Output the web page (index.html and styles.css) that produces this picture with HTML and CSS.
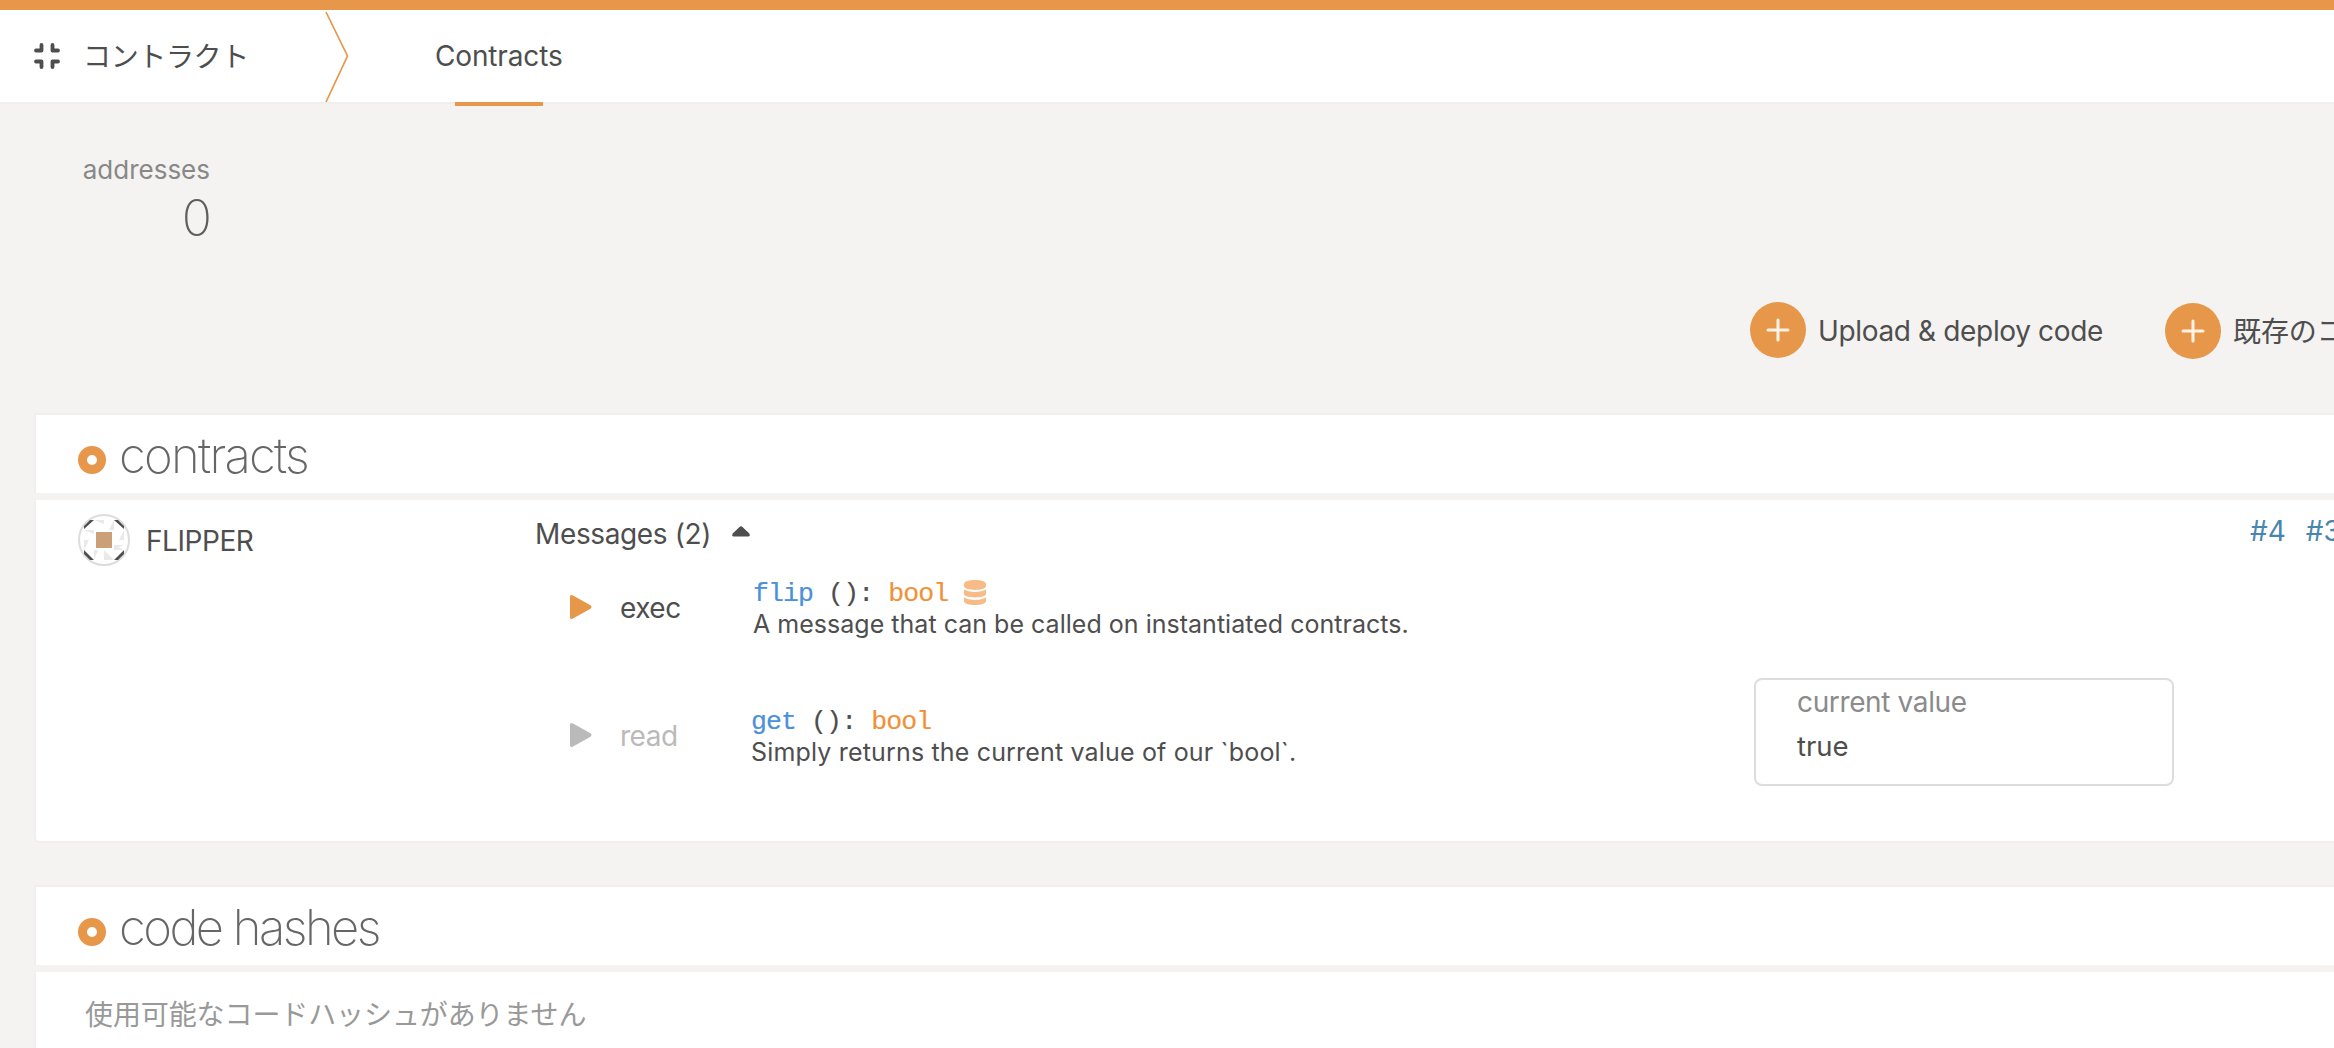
FILE: index.html
```html
<!DOCTYPE html>
<html lang="ja">
<head>
<meta charset="utf-8">
<title>Contracts</title>
<link rel="stylesheet" href="styles.css">
</head>
<body>
<header class="tabs">
  <div class="section-name">
    <svg class="compress" viewBox="0 0 26 26"><path d="M7.500 2V7.500H2M18.500 2V7.500H24M7.500 24V18.500H2M18.500 24V18.500H24"/></svg>
    <span class="jp">コントラクト</span>
  </div>
  <svg class="arrow" viewBox="0 0 24 92"><path d="M1 2L22.500 46L1 92"/></svg>
  <a class="tab"><span>Contracts</span></a>
</header>
<main>
  <section class="summary">
    <div class="summary-label">addresses</div>
    <div class="summary-value">0</div>
  </section>
  <div class="buttons">
    <button class="button"><svg viewBox="0 0 56 56"><circle cx="28" cy="28" r="28"/><path d="M28 18V38M18 28H38"/></svg><span class="upload">Upload &amp; deploy code</span></button>
    <button class="button second"><svg viewBox="0 0 56 56"><circle cx="28" cy="28" r="28"/><path d="M28 18V38M18 28H38"/></svg><span class="jp">既存のコ</span></button>
  </div>

  <section class="table">
    <h1 class="table-head"><i class="ring"></i><span class="title-contracts">contracts</span></h1>
    <div class="table-body contract">
      <div class="account">
        <svg class="identicon" viewBox="0 0 52 52">
          <circle class="edge" cx="26" cy="26" r="25"/>
          <path class="pale" d="M16 6H26V10ZM36 6V16H31ZM6 16H16V20ZM46 16V26H41ZM36 31H46L36 35ZM26 36L36 46H26ZM16 36H20L16 46ZM6 26H11L6 36ZM26 41L35 46H26ZM36 31L46 36H36Z"/>
          <path class="dark" d="M6 12L12 6H16L6 15ZM36 6H40L46 12V15ZM6 36L16 46H12L6 40ZM36 46L46 36V40L40 46Z"/>
          <path class="core" d="M18 18H34V34H18Z"/>
        </svg>
        <span class="name">FLIPPER</span>
      </div>
      <div class="messages">
        <div class="summary-row"><span class="msg-title">Messages (2)</span><svg class="caret" viewBox="0 0 18 11"><path d="M7.500 0.900Q9 -0.500 10.500 0.900L17.300 7.500Q18.500 10.500 16 10.500H2Q-0.500 10.500 0.700 7.500Z"/></svg></div>
        <div class="message">
          <div class="action"><svg class="play" viewBox="0 0 22 24"><path d="M0 2Q0-1 3 .5L20.500 10.300Q22.500 12 20.500 13.700L3 23.500Q0 25 0 22Z"/></svg><span>exec</span></div>
          <div class="details"><div class="signature"><b>flip</b> (): <em>bool</em><svg class="database" viewBox="0 0 22 25"><path d="M0 4C0-1.200 22-1.200 22 4V6C22 11.200 0 11.200 0 6ZM0 9.300Q4 12 11 12T22 9.300V14C22 18.500 0 18.500 0 14ZM0 17.300Q4 20 11 20T22 17.300V21C22 26.300 0 26.300 0 21Z"/></svg></div><p>A message that can be called on instantiated contracts.</p></div>
        </div>
        <div class="message getter">
          <div class="action"><svg class="play" viewBox="0 0 22 24"><path d="M0 2Q0-1 3 .5L20.500 10.300Q22.500 12 20.500 13.700L3 23.500Q0 25 0 22Z"/></svg><span>read</span></div>
          <div class="details"><div class="signature"><b>get</b> (): <em>bool</em></div><p>Simply returns the current value of our `bool`.</p></div>
          <div class="output"><label>current value</label><output>true</output></div>
        </div>
      </div>
      <nav class="sessions"><a>#4</a><a>#3</a></nav>
    </div>
  </section>

  <section class="table hashes">
    <h1 class="table-head"><i class="ring"></i><span class="title-hashes">code hashes</span></h1>
    <div class="table-body empty"><span class="jp">使用可能なコードハッシュがありません</span></div>
  </section>
</main>
</body>
</html>
```
FILE: styles.css
```css
* { box-sizing: border-box; }
body {
  margin: 0;
  height: 1048px;
  overflow: hidden;
  border-top: 10px solid #e6974a;
  background: #f4f3f1;
  color: #4e4e4e;
  font-family: Inter, "Noto Sans CJK JP", sans-serif;
  font-size: 28px;
  line-height: 40px;
  white-space: nowrap;
}
main { overflow: hidden; }
svg { display: block; flex: none; }
p, h1 { margin: 0; font-weight: 400; }
.jp { font-family: "Noto Sans CJK JP", sans-serif; letter-spacing: -0.1px; margin-bottom: 2px; }

.tabs { display: flex; height: 94px; background: #fff; border-bottom: 2px solid #f1efee; }
.section-name { display: flex; align-items: center; width: 325px; padding-left: 34px; padding-bottom: 1px; }
.section-name .jp { letter-spacing: -0.35px; }
.compress { width: 26px; height: 26px; margin-right: 23px; fill: none; stroke: #4e4e4e; stroke-width: 3.800; stroke-linecap: round; stroke-linejoin: round; }
.arrow { width: 24px; height: 92px; fill: none; stroke: #e6974a; stroke-width: 1.700; }
.tab { position: relative; display: flex; align-items: center; margin-left: 86px; letter-spacing: -0.15px; }
.tab::after { content: ""; position: absolute; left: 20px; bottom: -4px; width: 88px; height: 4px; background: #e6974a; }

.summary { width: 210px; padding-top: 46px; text-align: right; }
.summary-label { font-size: 26px; color: #898888; line-height: 40px; }
.summary-value { margin-right: -2px; font-size: 50px; font-weight: 250; line-height: 56px; color: #5e5e5e; }
.buttons { display: flex; gap: 62px; height: 58px; margin: 56px 0 0 1750px; }
.button { display: flex; flex: none; align-items: center; gap: 12px; height: 56px; padding: 0; border: 0; background: none; color: inherit; font: inherit; }
.button svg { width: 56px; height: 56px; fill: #e6974a; stroke: #fff3e6; stroke-width: 3; stroke-linecap: round; }
.button circle { stroke: none; }
.upload { width: 285px; margin-top: 2px; letter-spacing: -0.35px; text-align: left; }
.second { margin-top: 1px; }

.table { margin: 53px 0 0 34px; }
.table-head { display: flex; align-items: center; height: 80px; padding: 4px 0 0 42px; background: #fff; border: solid #f1efee; border-width: 2px 0 0 2px; color: #666; font-size: 49px; font-weight: 250; }
.ring { width: 28px; height: 28px; margin: 8px 13px 0 0; border: 9px solid #e6974a; border-radius: 50%; }
.title-contracts { letter-spacing: -1.75px; }
.title-hashes { letter-spacing: -2.55px; }
.table-body { margin-top: 7px; background: #fff; border: solid #f1efee; border-width: 0 0 2px 2px; border-bottom-left-radius: 6px; }
.contract { display: flex; height: 343px; padding-left: 42px; }
.account { display: flex; flex: none; align-items: flex-start; width: 457px; padding-top: 14px; }
.identicon { width: 52px; height: 52px; margin-right: 16px; }
.name { margin-top: 7px; letter-spacing: -0.45px; }
.edge { fill: #fff; stroke: #ddd; stroke-width: 2; }
.pale { fill: #e9e9e9; }
.dark { fill: #4e4e4e; }
.core { fill: #cb9f78; }
.messages { flex: none; width: 1639px; padding-top: 14px; }
.summary-row { display: flex; align-items: center; }
.msg-title { width: 175px; letter-spacing: -0.37px; }
.caret { width: 18px; height: 11px; margin: 0 0 5px 22px; fill: #4e4e4e; }
.message { display: flex; height: 128px; padding: 21px 0 0 35px; }
.action { display: flex; flex: none; align-items: center; height: 64px; width: 183px; }
.action span { padding-top: 2px; letter-spacing: -0.5px; }
.play { width: 22px; height: 24px; margin-right: 28px; fill: #e6974a; }
.details { flex: none; width: 1000px; }
.signature { display: flex; align-items: center; height: 36px; padding-top: 3px; font: 26.500px/33px "Liberation Mono", monospace; letter-spacing: -0.88px; white-space: pre; -webkit-text-stroke: 0.2px; }
.signature b { color: #4a90da; font-weight: 400; }
.signature em { color: #f19135; font-style: normal; }
.database { width: 22px; height: 25px; margin: 0 0 4px 16px; fill: #f6bb87; stroke: none; }
.details p { margin-top: -1px; font-size: 25px; line-height: 28px; letter-spacing: 0.02px; }
.getter .action { width: 181px; color: #bababa; }
.getter .play { fill: #bababa; }
.getter .details { width: 1003px; }
.getter p { letter-spacing: 0.17px; }
.output { display: flex; flex: none; flex-direction: column; width: 420px; height: 108px; margin-top: -25px; padding: 2px 0 0 41px; border: 2px solid #ddd; border-radius: 8px; }
.output label { color: #8b8b8b; letter-spacing: -0.37px; }
.output output { margin-top: 4px; font-size: 27.500px; }
.sessions { display: flex; gap: 20px; padding-top: 11px; margin-left: 76px; color: #4986ad; }

.hashes { margin-top: 42px; }
.empty { height: 100px; padding: 21px 0 0 49px; color: #999; }
```
